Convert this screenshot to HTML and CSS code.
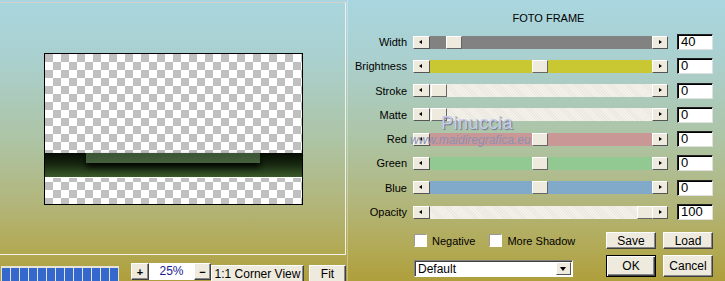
FILE: index.html
```html
<!DOCTYPE html>
<html lang="en">
<head>
    <meta charset="UTF-8">
    <title>Foto Frame</title>
    <link rel="stylesheet" href="styles.css">
</head>
<body>
    <div class="window">
        <!-- Preview side -->
        <div class="left">
            <div class="preview">
                <div class="canvas">
                    <div class="band"><div class="inner"></div></div>
                </div>
            </div>
            <div class="toolbar">
                <div class="progress">
                    <span></span><span></span><span></span><span></span><span></span>
                    <span></span><span></span><span></span><span></span><span></span>
                    <span></span><span></span><span></span>
                </div>
                <button class="btn zoom-btn plus">+</button>
                <div class="zoom-value">25%</div>
                <button class="btn zoom-btn">&minus;</button>
                <button class="btn corner">1:1 Corner View</button>
                <button class="btn fit">Fit</button>
            </div>
        </div>

        <!-- Settings side -->
        <div class="right">
            <div class="title">FOTO FRAME</div>

            <div class="controls">
                <div class="label">Width</div>
                <div class="slider"><span class="arrow left"></span><div class="track gray"><span class="thumb" style="left: 16px"></span></div><span class="arrow right"></span></div>
                <div class="value">40</div>

                <div class="label">Brightness</div>
                <div class="slider"><span class="arrow left"></span><div class="track yellow"><span class="thumb" style="left: 102px"></span></div><span class="arrow right"></span></div>
                <div class="value">0</div>

                <div class="label">Stroke</div>
                <div class="slider"><span class="arrow left"></span><div class="track hatch"><span class="thumb" style="left: 1px"></span></div><span class="arrow right"></span></div>
                <div class="value">0</div>

                <div class="label">Matte</div>
                <div class="slider"><span class="arrow left"></span><div class="track hatch"><span class="thumb" style="left: 1px"></span></div><span class="arrow right"></span></div>
                <div class="value">0</div>

                <div class="label">Red</div>
                <div class="slider"><span class="arrow left"></span><div class="track red"><span class="thumb" style="left: 102px"></span></div><span class="arrow right"></span></div>
                <div class="value">0</div>

                <div class="label">Green</div>
                <div class="slider"><span class="arrow left"></span><div class="track green"><span class="thumb" style="left: 102px"></span></div><span class="arrow right"></span></div>
                <div class="value">0</div>

                <div class="label">Blue</div>
                <div class="slider"><span class="arrow left"></span><div class="track blue"><span class="thumb" style="left: 102px"></span></div><span class="arrow right"></span></div>
                <div class="value">0</div>

                <div class="label">Opacity</div>
                <div class="slider"><span class="arrow left"></span><div class="track hatch"><span class="thumb" style="left: 207px"></span></div><span class="arrow right"></span></div>
                <div class="value">100</div>
            </div>

            <div class="bottom">
                <div class="checks">
                    <label class="check"><span class="box"></span>Negative</label>
                    <label class="check"><span class="box"></span>More Shadow</label>
                </div>
                <button class="btn action">Save</button>
                <button class="btn action">Load</button>

                <div class="select">
                    <span>Default</span>
                    <span class="select-arrow"></span>
                </div>
                <button class="btn action big default">OK</button>
                <button class="btn action big">Cancel</button>
            </div>

            <!-- watermark over the panel -->
            <div class="mark-name">Pinuccia</div>
            <div class="mark-site">www.maidiregrafica.eu</div>
        </div>
    </div>
</body>
</html>
```

FILE: styles.css
```css
* {
    box-sizing: border-box;
}

body {
    margin: 0;
    width: 725px;
    height: 281px;
    overflow: hidden;
    font-family: 'Liberation Sans', Arial, sans-serif;
    font-size: 11px;
    color: #000;
    background: linear-gradient(to bottom, #a9d6df 0%, #aad0d0 20%, #adc4a4 50%, #b2b67c 72%, #b2aa56 88%, #af9f3c 100%);
}

.window {
    display: flex;
    height: 281px;
}

/* ---------- preview ---------- */

.left {
    width: 347px;
    flex: none;
}

.preview {
    margin-top: 2px;
    width: 346px;
    height: 253px;
    border-top: 1px solid #d2d4cc;
    border-right: 1px solid #f2f2ea;
    border-bottom: 1px solid #f2f2ea;
    padding: 50px 0 0 44px;
}

/* transparent image shown as a checkerboard */
.canvas {
    width: 259px;
    height: 152px;
    padding-top: 99px;
    overflow: hidden;
    border: 1px solid #000;
    background-color: #fff;
    background-image:
        linear-gradient(45deg, #c0c0c0 25%, transparent 25%, transparent 75%, #c0c0c0 75%),
        linear-gradient(45deg, #c0c0c0 25%, transparent 25%, transparent 75%, #c0c0c0 75%);
    background-size: 16px 16px;
    background-position: 8px 0, 0 8px;
}

.band {
    height: 25px;
    border-bottom: 1px solid #fff;
    background: linear-gradient(to bottom, #060c04 0%, #162610 45%, #3b5a2a 100%);
    background-clip: padding-box;
}

.inner {
    margin-left: 41px;
    width: 174px;
    height: 10px;
    background: linear-gradient(to bottom, #3a5434, #44603c);
    box-shadow: 0 4px 6px rgba(0, 0, 0, 0.9);
}

.toolbar {
    display: flex;
    align-items: flex-start;
    height: 26px;
}

.progress {
    display: flex;
    gap: 1px;
    margin: 11px 0 0 1px;
    width: 118px;
    height: 16px;
    padding: 2px 1px 0;
    background: #e4e4dc;
}

.progress span {
    flex: none;
    width: 8px;
    background: #3468cc;
}

/* ---------- classic buttons ---------- */

.btn {
    font-family: 'Liberation Sans', Arial, sans-serif;
    font-size: 11px;
    color: #000;
    background: #eeeade;
    border: 1px solid;
    border-color: #fff #404040 #404040 #fff;
    box-shadow: inset -1px -1px #888;
    padding: 0;
}

.zoom-btn {
    margin-top: 8px;
    width: 17px;
    height: 17px;
    font-weight: bold;
    line-height: 14px;
}

.zoom-btn.plus {
    margin-left: 12px;
    width: 18px;
}

.zoom-value {
    margin-top: 8px;
    width: 45px;
    height: 17px;
    background: #fff;
    color: #1c1c90;
    font-size: 12px;
    line-height: 17px;
    text-align: center;
}

.corner {
    margin-top: 10px;
    width: 93px;
    height: 18px;
    font-size: 12px;
}

.fit {
    margin: 10px 0 0 5px;
    width: 37px;
    height: 18px;
    font-size: 12px;
}

/* ---------- settings ---------- */

.right {
    position: relative;
    flex: 1;
    padding: 11px 0 0 2px;
    border-left: 1px solid rgba(255, 255, 255, 0.3);
}

.title {
    width: 363px;
    padding-left: 34px;
    text-align: center;
    line-height: 14px;
}

.controls {
    display: grid;
    grid-template-columns: 63px 264px 36px;
    grid-auto-rows: 16px;
    row-gap: 8.3px;
    margin-top: 9px;
}

.label {
    padding-right: 6px;
    text-align: right;
    line-height: 16px;
    white-space: nowrap;
}

.slider {
    display: flex;
    align-items: center;
    width: 255px;
}

.arrow {
    position: relative;
    flex: none;
    width: 17px;
    height: 13px;
    background: #eeeade;
    border: 1px solid;
    border-color: #fff #555 #555 #fff;
}

.arrow.right {
    width: 16px;
}

.arrow::after {
    content: '';
    position: absolute;
    top: 3px;
    border-top: 2.5px solid transparent;
    border-bottom: 2.5px solid transparent;
}

.arrow.left::after {
    left: 5px;
    border-right: 3px solid #000;
}

.arrow.right::after {
    left: 6px;
    border-left: 3px solid #000;
}

.track {
    position: relative;
    flex: 1;
    height: 13px;
}

.track.gray { background: #828282; }
.track.yellow { background: #c9c832; }
.track.red { background: #c99796; }
.track.green { background: #92c891; }
.track.blue { background: #80a9ca; }

.track.hatch {
    background: repeating-linear-gradient(45deg, #f4f2ea 0 1px, #ebe9df 1px 2px);
}

.thumb {
    position: absolute;
    top: 0;
    width: 16px;
    height: 13px;
    background: #eeeade;
    border: 1px solid;
    border-color: #fff #666 #666 #fff;
}

.value {
    width: 36px;
    height: 16px;
    background: #fff;
    border: 1px solid;
    border-color: #222 #e0e0e0 #e0e0e0 #222;
    box-shadow: inset 1px 1px #000;
    padding-left: 3px;
    font-size: 13px;
    line-height: 14px;
}

.bottom {
    display: grid;
    grid-template-columns: 185px 50px 50px;
    grid-template-rows: 17px 22px;
    column-gap: 7px;
    row-gap: 6px;
    margin-top: 12px;
    padding-left: 64px;
}

.checks {
    display: flex;
    align-items: center;
    gap: 14px;
    font-size: 11px;
}

.check {
    display: flex;
    align-items: center;
    gap: 5px;
}

.box {
    width: 13px;
    height: 13px;
    background: #fff;
    border: 1px solid;
    border-color: #999 #fff #fff #999;
}

.action {
    width: 50px;
    height: 17px;
    font-size: 12px;
}

.action.big {
    height: 22px;
}

.action.default {
    border: 1px solid #000;
    box-shadow: inset 1px 1px #fff, inset -1px -1px #404040, inset -2px -2px #888;
}

.select {
    align-self: end;
    display: flex;
    align-items: center;
    justify-content: space-between;
    width: 159px;
    height: 17px;
    padding: 0 1px 0 3px;
    background: #fff;
    border: 1px solid;
    border-color: #808080 #fff #fff #808080;
    box-shadow: inset 1px 1px #404040;
    font-size: 12px;
}

.select-arrow {
    position: relative;
    width: 15px;
    height: 13px;
    background: #eeeade;
    border: 1px solid;
    border-color: #fff #555 #555 #fff;
}

.select-arrow::after {
    content: '';
    position: absolute;
    top: 4px;
    left: 3px;
    border-left: 3.5px solid transparent;
    border-right: 3.5px solid transparent;
    border-top: 4px solid #000;
}

/* watermark */

.mark-name {
    position: absolute;
    left: 93px;
    top: 113px;
    font-size: 18px;
    letter-spacing: 0.5px;
    color: #c8cce8;
    text-shadow: 1px 1px 1px #6c7492;
}

.mark-site {
    position: absolute;
    left: 62px;
    top: 133px;
    font-size: 12px;
    font-style: italic;
    color: #8a92b4;
}
```
